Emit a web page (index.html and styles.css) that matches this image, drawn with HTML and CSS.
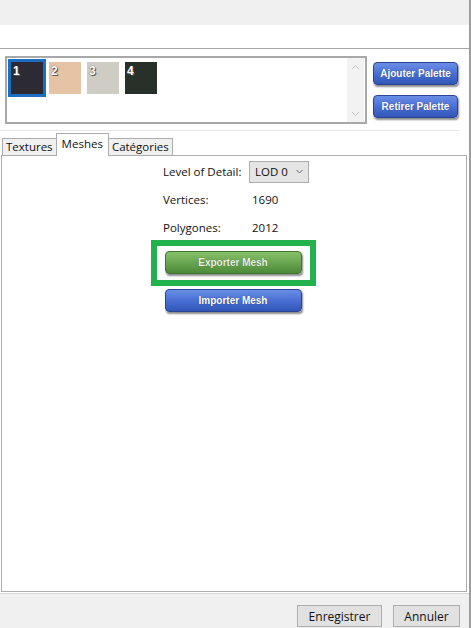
FILE: index.html
```html
<!DOCTYPE html>
<html lang="fr">
<head>
    <meta charset="UTF-8">
    <title>Palette et Meshes</title>
    <link rel="stylesheet" href="styles.css">
</head>
<body>
    <div class="window">
        <div class="title-band"></div>
        <div class="menu-band"></div>

        <div class="main">
            <div class="palette-row">
                <div class="palette-list">
                    <div class="swatches">
                        <div class="swatch-item selected"><div class="swatch c1"><span>1</span></div></div>
                        <div class="swatch-item"><div class="swatch c2"><span>2</span></div></div>
                        <div class="swatch-item"><div class="swatch c3"><span>3</span></div></div>
                        <div class="swatch-item"><div class="swatch c4"><span>4</span></div></div>
                    </div>
                    <div class="scrollbar">
                        <svg width="9" height="6" viewBox="0 0 9 6"><path d="M1 5 L4.5 1.5 L8 5" fill="none" stroke="#c4c4c4" stroke-width="1"/></svg>
                        <svg width="9" height="6" viewBox="0 0 9 6"><path d="M1 1 L4.5 4.5 L8 1" fill="none" stroke="#c4c4c4" stroke-width="1"/></svg>
                    </div>
                </div>
                <div class="palette-buttons">
                    <button class="gel-btn blue">Ajouter Palette</button>
                    <button class="gel-btn blue">Retirer Palette</button>
                </div>
            </div>

            <div class="separator"></div>

            <div class="tabs">
                <div class="tab">Textures</div>
                <div class="tab active">Meshes</div>
                <div class="tab">Catégories</div>
            </div>

            <div class="tab-panel">
                <div class="mesh-info">
                    <div class="info-row">
                        <span class="label">Level of Detail:</span>
                        <div class="combo">
                            LOD 0
                            <svg class="caret" width="7" height="5" viewBox="0 0 7 5"><path d="M0.5 1 L3.5 4 L6.5 1" fill="none" stroke="#666" stroke-width="1"/></svg>
                        </div>
                    </div>
                    <div class="info-row">
                        <span class="label">Vertices:</span>
                        <span class="value">1690</span>
                    </div>
                    <div class="info-row">
                        <span class="label">Polygones:</span>
                        <span class="value">2012</span>
                    </div>
                </div>

                <div class="mesh-actions">
                    <div class="highlight">
                        <button class="gel-btn green wide">Exporter Mesh</button>
                    </div>
                    <button class="gel-btn blue wide">Importer Mesh</button>
                </div>
            </div>
        </div>

        <div class="footer">
            <button class="win-btn save">Enregistrer</button>
            <button class="win-btn cancel">Annuler</button>
        </div>
    </div>
</body>
</html>
```

FILE: styles.css
```css
* {
    margin: 0;
    padding: 0;
    box-sizing: border-box;
}

body {
    background: #f0f0f0;
    font-family: 'Open Sans', 'Noto Sans', sans-serif;
    font-size: 11px;
    color: #111;
}

.window {
    width: 471px;
    height: 628px;
    border-right: 2px solid #9d9d9d;
    display: flex;
    flex-direction: column;
}

.title-band {
    height: 25px;
    background: #f0f0f0;
}

.menu-band {
    height: 24px;
    background: #fff;
    border-bottom: 1px solid #a6a6a6;
}

.main {
    height: 544px;
    background: #fff;
    padding-top: 7px;
}

/* palette list + buttons */
.palette-row {
    display: flex;
    padding-left: 5px;
    gap: 6px;
}

.palette-list {
    width: 362px;
    height: 68px;
    border: 2px solid #a8a8a8;
    display: flex;
    justify-content: space-between;
    background: #fff;
}

.swatches {
    display: flex;
    padding: 1px 0 0 1px;
    align-items: flex-start;
}

.swatch-item {
    width: 38px;
    height: 38px;
    padding: 3px;
}

.swatch-item.selected {
    background: #1a6fc2;
}

.swatch {
    width: 32px;
    height: 32px;
    padding: 1px 0 0 2px;
}

.swatch span {
    font-family: 'Liberation Sans', sans-serif;
    font-weight: bold;
    font-size: 12px;
    color: #fff;
    line-height: 13px;
    text-shadow: 1px 1px 0 #555, 0 0 1px #333;
}

.c1 { background: #2c2a33; }
.c2 { background: #e7c3a6; }
.c3 { background: #cfccc3; }
.c4 { background: #29302a; }

.scrollbar {
    width: 17px;
    margin-right: 1px;
    background: #f2f2f2;
    display: flex;
    flex-direction: column;
    justify-content: space-between;
    align-items: center;
    padding: 6px 0 5px;
}

.palette-buttons {
    display: flex;
    flex-direction: column;
    gap: 10px;
    padding-top: 6px;
}

/* glossy rounded buttons */
.gel-btn {
    font-family: 'Liberation Sans', sans-serif;
    font-weight: bold;
    font-size: 10px;
    color: #fff;
    border: 1px solid #2a4494;
    border-radius: 4px;
    width: 85px;
    height: 23px;
    box-shadow: 1px 2px 2px rgba(0, 0, 0, 0.45);
    text-shadow: 0 0 1px rgba(0, 0, 0, 0.5);
}

.gel-btn.blue {
    background: linear-gradient(#6a8ee6, #4a6fd4 50%, #3156b8);
}

.gel-btn.green {
    background: linear-gradient(#88c06a, #6aa651 50%, #4b8a38);
    border-color: #3f7530;
    color: #eaf3e4;
}

.gel-btn.wide {
    width: 137px;
    height: 23px;
}

.separator {
    height: 1px;
    background: #e6e6e6;
    margin: 6px 9px 0 0;
}

/* tab strip */
.tabs {
    display: flex;
    align-items: flex-end;
    padding-left: 2px;
    margin-top: 1px;
    height: 23px;
}

.tab {
    height: 17px;
    background: #f0f0f0;
    border: 1px solid #acacac;
    border-bottom: none;
    padding: 0 3px;
    line-height: 15px;
    font-size: 11.5px;
    color: #111;
}

.tab + .tab {
    margin-left: -1px;
}

.tab.active {
    height: 23px;
    background: #fff;
    position: relative;
    margin-bottom: -1px;
    z-index: 1;
    padding: 0 5px;
    line-height: 20px;
}

.tab-panel {
    width: 466px;
    height: 437px;
    margin-left: 1px;
    border: 1px solid #acacac;
    background: #fff;
    padding-top: 5px;
}

.mesh-info {
    padding-left: 161px;
}

.info-row {
    height: 28px;
    display: flex;
    align-items: flex-start;
    font-size: 11.5px;
}

.label {
    width: 86px;
    line-height: 22px;
}

.value {
    line-height: 22px;
    padding-left: 3px;
}

.combo {
    width: 60px;
    height: 22px;
    background: #e5e5e5;
    border: 1px solid #adadad;
    line-height: 20px;
    padding-left: 5px;
}

.caret {
    margin-left: 5px;
    vertical-align: 2px;
}

.mesh-actions {
    display: flex;
    flex-direction: column;
    align-items: center;
    gap: 3px;
    margin-top: -5px;
    padding-right: 2px;
}

.highlight {
    width: 165px;
    height: 46px;
    border: 6px solid #22b14c;
    background: #fff;
    display: flex;
    justify-content: center;
    align-items: center;
    padding-bottom: 2px;
}

/* bottom dialog buttons */
.footer {
    flex: 1;
    border-top: 1px solid #d8d8d8;
    display: flex;
    justify-content: flex-end;
    align-items: flex-start;
    gap: 11px;
    padding: 11px 9px 0 0;
}

.win-btn {
    font-family: 'Open Sans', sans-serif;
    font-size: 12px;
    height: 22px;
    background: #e1e1e1;
    border: 1px solid #adadad;
    color: #111;
}

.win-btn.save {
    width: 85px;
}

.win-btn.cancel {
    width: 67px;
}
```
